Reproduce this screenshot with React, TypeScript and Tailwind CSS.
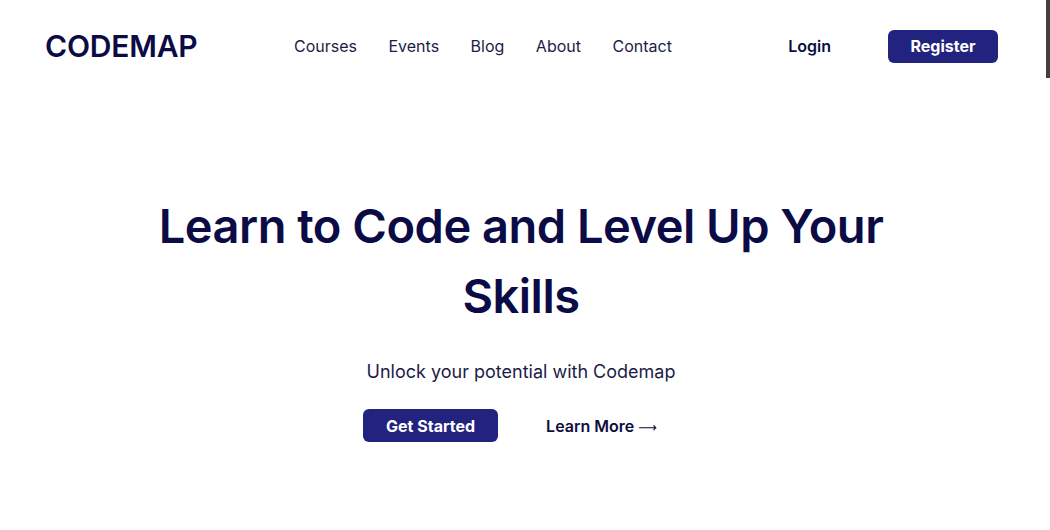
const App = () => {
    return (
        <div className="relative w-full h-[530px] bg-white text-[#0d0d3f] font-['Inter',sans-serif] overflow-hidden">
            <header className="flex items-center h-[92px] pl-[45px] pr-[52px]">
                <div className="w-[249px] text-[30px] font-semibold tracking-[-0.2px] text-[#0c0c45]">CODEMAP</div>
                <nav className="flex gap-[31.5px] text-[16px] text-[#1c1c45]">
                    <a href="#">Courses</a>
                    <a href="#">Events</a>
                    <a href="#">Blog</a>
                    <a href="#">About</a>
                    <a href="#">Contact</a>
                </nav>
                <div className="ml-auto flex items-center gap-[57px]">
                    <a href="#" className="text-[16px] font-semibold text-[#0d0d3f]">Login</a>
                    <button className="w-[110px] h-[33px] rounded-[6px] bg-[#22237f] text-white text-[16px] font-bold">Register</button>
                </div>
            </header>
            <main className="flex flex-col items-center pt-[99px] pr-[8px]">
                <h1 className="max-w-[760px] text-center text-[47px] leading-[70px] font-semibold tracking-[-0.5px] text-[#0b0b45]">Learn to Code and Level Up Your Skills</h1>
                <p className="mt-[27px] text-[18px] text-[#1c1c45]">Unlock your potential with Codemap</p>
                <div className="flex items-center gap-[48px] mt-[24px] pr-[22px]">
                    <button className="w-[135px] h-[33px] rounded-[6px] bg-[#22237f] text-white text-[16px] font-bold">Get Started</button>
                    <a href="#" className="text-[16px] font-semibold text-[#0d0d3f]">Learn More <span className="font-['DejaVu_Sans'] font-normal text-[13px]">⟶</span></a>
                </div>
            </main>
            <div className="absolute right-0 top-0 w-[4px] h-[78px] bg-[#404040]" />
        </div>
    );
};

export default App;
